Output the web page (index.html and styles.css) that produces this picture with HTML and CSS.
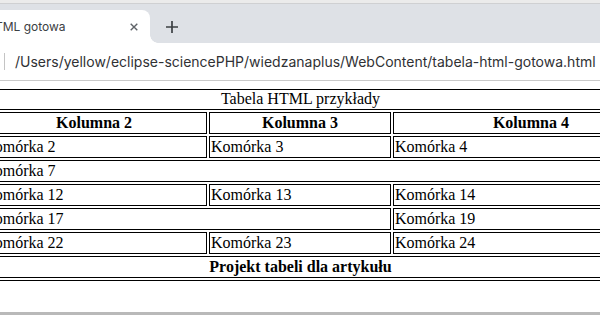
FILE: index.html
```html
<!DOCTYPE html>
<html lang="pl">
<head>
<meta charset="utf-8">
<title>Tabela HTML gotowa</title>
<link rel="stylesheet" href="styles.css">
</head>
<body>
<div class="window">
  <div class="tabstrip">
    <div class="tab">
      <span class="tab-title">Tabela HTML gotowa</span>
      <svg class="tab-close" width="8" height="8" viewBox="0 0 8 8"><path d="M0.7 0.7L7.3 7.3M7.3 0.7L0.7 7.3"/></svg>
    </div>
    <svg class="newtab" width="12" height="12" viewBox="0 0 12 12"><path d="M6 0V12M0 6H12"/></svg>
  </div>
  <div class="toolbar">
    <span class="sep"></span>
    <span class="url">/Users/yellow/eclipse-sciencePHP/wiedzanaplus/WebContent/tabela-html-gotowa.html</span>
  </div>
  <div class="viewport">
    <table class="demo">
      <caption>Tabela HTML przykłady</caption>
      <colgroup>
        <col class="c1"><col class="c2"><col class="c3"><col class="c4"><col class="c5">
      </colgroup>
      <thead>
        <tr><th>Kolumna 1</th><th>Kolumna 2</th><th>Kolumna 3</th><th>Kolumna 4</th><th>Kolumna 5</th></tr>
      </thead>
      <tbody>
        <tr><td>Komórka 1</td><td>Komórka 2</td><td>Komórka 3</td><td>Komórka 4</td><td>Komórka 5</td></tr>
        <tr><td>Komórka 6</td><td colspan="3">Komórka 7</td><td>Komórka 10</td></tr>
        <tr><td>Komórka 11</td><td>Komórka 12</td><td>Komórka 13</td><td>Komórka 14</td><td>Komórka 15</td></tr>
        <tr><td>Komórka 16</td><td colspan="2">Komórka 17</td><td>Komórka 19</td><td>Komórka 20</td></tr>
        <tr><td>Komórka 21</td><td>Komórka 22</td><td>Komórka 23</td><td>Komórka 24</td><td>Komórka 25</td></tr>
      </tbody>
      <tfoot>
        <tr><th colspan="5">Projekt tabeli dla artykułu</th></tr>
      </tfoot>
    </table>
  </div>
  <div class="frame-edge"></div>
</div>
</body>
</html>
```

FILE: styles.css
```css
html, body {
  margin: 0;
  padding: 0;
  background: #ffffff;
}

.window {
  width: 600px;
  height: 315px;
  overflow: hidden;
  display: flex;
  flex-direction: column;
}

.tabstrip {
  height: 33px;
  flex: none;
  display: flex;
  align-items: flex-end;
  background: #dee1e6;
  border-top: 3px solid #ebebeb;
  box-shadow: inset 0 1px 0 #cfd0d2;
  padding-top: 7px;
}

.tab {
  position: relative;
  width: 223px;
  height: 33px;
  margin-left: -73px;
  padding-left: 18px;
  box-sizing: border-box;
  background: #ffffff;
  border-radius: 0 8px 0 0;
  display: flex;
  align-items: center;
}

.tab::after {
  content: "";
  position: absolute;
  right: -8px;
  bottom: 0;
  width: 8px;
  height: 8px;
  background: radial-gradient(circle at 100% 0, transparent 7.5px, #ffffff 8px);
}

.tab-title {
  font: 12px "Inter", "Liberation Sans", sans-serif;
  color: #3c4043;
  white-space: nowrap;
  padding-bottom: 1px;
}

.tab-close {
  margin-left: auto;
  margin-right: 12px;
  stroke: #5f6368;
  stroke-width: 1.4;
  fill: none;
}

.newtab {
  margin-left: 16px;
  margin-bottom: 10px;
  stroke: #3c4043;
  stroke-width: 1.7;
  fill: none;
}

.toolbar {
  height: 37px;
  flex: none;
  display: flex;
  align-items: center;
  background: #ffffff;
  border-bottom: 1px solid #c9c9c9;
}

.sep {
  width: 1px;
  height: 17px;
  margin-left: 4px;
  background: #c4c4c4;
}

.url {
  margin-left: 10px;
  font: 14px "Inter", "Liberation Sans", sans-serif;
  color: #303134;
  white-space: nowrap;
}

.viewport {
  flex: 1;
  overflow: hidden;
  padding-top: 8px;
}

.frame-edge {
  height: 3px;
  flex: none;
  background: #b9b9b9;
}

.demo {
  font: 16px "Liberation Serif", "Times New Roman", serif;
  color: #000000;
  border: 1px solid #000000;
  border-spacing: 2px;
  table-layout: fixed;
  width: 941px;
  margin-left: -170px;
}

.demo caption {
  border-top: 1px solid #000000;
  padding-bottom: 1px;
}

.demo th,
.demo td {
  border: 1px solid #000000;
  padding: 1px;
}

.demo td {
  text-align: left;
}

.c1 { width: 143px; }
.c2 { width: 221px; }
.c3 { width: 178px; }
.c4 { width: 270px; }
.c5 { width: 95px; }
```
